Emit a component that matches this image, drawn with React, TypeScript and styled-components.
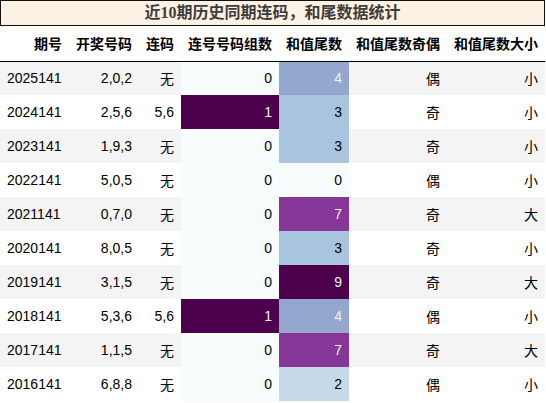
import styled, { createGlobalStyle } from "styled-components";

////////////////////////////////////////////////////
////////////////////// DATA ////////////////////////
////////////////////////////////////////////////////

interface IDraw {
   issue: string;
   numbers: string;
   pair: string;
   groups: number;
   tail: number;
   parity: string;
   size: string;
}

const ROWS: IDraw[] = [
   { issue: '2025141', numbers: '2,0,2', pair: '无', groups: 0, tail: 4, parity: '偶', size: '小' },
   { issue: '2024141', numbers: '2,5,6', pair: '5,6', groups: 1, tail: 3, parity: '奇', size: '小' },
   { issue: '2023141', numbers: '1,9,3', pair: '无', groups: 0, tail: 3, parity: '奇', size: '小' },
   { issue: '2022141', numbers: '5,0,5', pair: '无', groups: 0, tail: 0, parity: '偶', size: '小' },
   { issue: '2021141', numbers: '0,7,0', pair: '无', groups: 0, tail: 7, parity: '奇', size: '大' },
   { issue: '2020141', numbers: '8,0,5', pair: '无', groups: 0, tail: 3, parity: '奇', size: '小' },
   { issue: '2019141', numbers: '3,1,5', pair: '无', groups: 0, tail: 9, parity: '奇', size: '大' },
   { issue: '2018141', numbers: '5,3,6', pair: '5,6', groups: 1, tail: 4, parity: '偶', size: '小' },
   { issue: '2017141', numbers: '1,1,5', pair: '无', groups: 0, tail: 7, parity: '奇', size: '大' },
   { issue: '2016141', numbers: '6,8,8', pair: '无', groups: 0, tail: 2, parity: '偶', size: '小' },
];

const HEADERS = ['期号', '开奖号码', '连码', '连号号码组数', '和值尾数', '和值尾数奇偶', '和值尾数大小'];
const WIDTHS = [69, 70, 42, 98, 70, 98, 98];

// BuPu colour map stops
const BUPU = ['#f7fcfd', '#e0ecf4', '#bfd3e6', '#9ebcda', '#8c96c6', '#8c6bb1', '#88419d', '#810f7c', '#4d004b'];

function hexToRgb(hex: string) {
   const n = parseInt(hex.slice(1), 16);
   return [(n >> 16) & 255, (n >> 8) & 255, n & 255];
}

function bupu(value: number, min: number, max: number) {
   const t = max === min ? 0 : (value - min) / (max - min);
   const pos = t * (BUPU.length - 1);
   const i = Math.min(Math.floor(pos), BUPU.length - 2);
   const f = pos - i;
   const a = hexToRgb(BUPU[i]);
   const b = hexToRgb(BUPU[i + 1]);
   const rgb = a.map((c, k) => Math.round(c + (b[k] - c) * f));
   const lum = rgb
      .map((c) => {
         const s = c / 255;
         return s <= 0.03928 ? s / 12.92 : Math.pow((s + 0.055) / 1.055, 2.4);
      })
      .reduce((acc, c, k) => acc + c * [0.2126, 0.7152, 0.0722][k], 0);
   return {
      bg: `rgb(${rgb[0]}, ${rgb[1]}, ${rgb[2]})`,
      fg: lum < 0.408 ? '#f1f1f1' : '#000000',
   };
}

////////////////////////////////////////////////////
//////////////////// COMPONENT /////////////////////
////////////////////////////////////////////////////

export default function App() {
   const groupVals = ROWS.map((r) => r.groups);
   const tailVals = ROWS.map((r) => r.tail);
   const gMin = Math.min(...groupVals), gMax = Math.max(...groupVals);
   const tMin = Math.min(...tailVals), tMax = Math.max(...tailVals);

   return (
      <>
         <GlobalStyle />
         <Table>
            <colgroup>
               {WIDTHS.map((w, i) => (
                  <col key={i} style={{ width: w }} />
               ))}
            </colgroup>
            <Caption>近10期历史同期连码，和尾数据统计</Caption>
            <thead>
               <tr>
                  {HEADERS.map((h) => (
                     <HeadCell key={h}>{h}</HeadCell>
                  ))}
               </tr>
            </thead>
            <tbody>
               {ROWS.map((r) => {
                  const g = bupu(r.groups, gMin, gMax);
                  const t = bupu(r.tail, tMin, tMax);
                  return (
                     <Row key={r.issue}>
                        <Cell $align="left">{r.issue}</Cell>
                        <Cell>{r.numbers}</Cell>
                        <Cell>{r.pair}</Cell>
                        <Cell $bg={g.bg} $fg={g.fg}>{r.groups}</Cell>
                        <Cell $bg={t.bg} $fg={t.fg}>{r.tail}</Cell>
                        <Cell>{r.parity}</Cell>
                        <Cell>{r.size}</Cell>
                     </Row>
                  );
               })}
            </tbody>
         </Table>
      </>
   );
}

////////////////////////////////////////////////////
//////////////// STYLED COMPONENTS /////////////////
////////////////////////////////////////////////////

const GlobalStyle = createGlobalStyle`
   html, body {
      margin: 0;
      padding: 0;
      background: #ffffff;
   }
`;

const Table = styled.table`
   border-collapse: collapse;
   border-spacing: 0;
   table-layout: fixed;
   width: 545px;
   font-family: "Liberation Sans", "Noto Sans CJK SC", sans-serif;
   font-size: 14px;
   color: #000000;
`;

const Caption = styled.caption`
   box-sizing: border-box;
   height: 26px;
   line-height: 23px;
   border: 1px solid #111111;
   background: #fdf1e4;
   color: #3d3d3d;
   font-family: "Liberation Serif", "Noto Sans CJK SC", serif;
   font-size: 16px;
   font-weight: bold;
   text-align: center;
`;

const HeadCell = styled.th`
   box-sizing: border-box;
   height: 35px;
   padding: 0 7px;
   text-align: right;
   font-weight: bold;
   vertical-align: middle;
   border-bottom: 1px solid #000000;
   white-space: nowrap;
`;

const Row = styled.tr`
   background: #ffffff;
   &:nth-child(odd) {
      background: #f4f4f4;
   }
`;

const Cell = styled.td<{ $bg?: string; $fg?: string; $align?: string }>`
   box-sizing: border-box;
   height: 34px;
   padding: 0 7px;
   text-align: ${(p) => p.$align || 'right'};
   vertical-align: middle;
   white-space: nowrap;
   background: ${(p) => p.$bg || 'transparent'};
   color: ${(p) => p.$fg || '#000000'};
`;
